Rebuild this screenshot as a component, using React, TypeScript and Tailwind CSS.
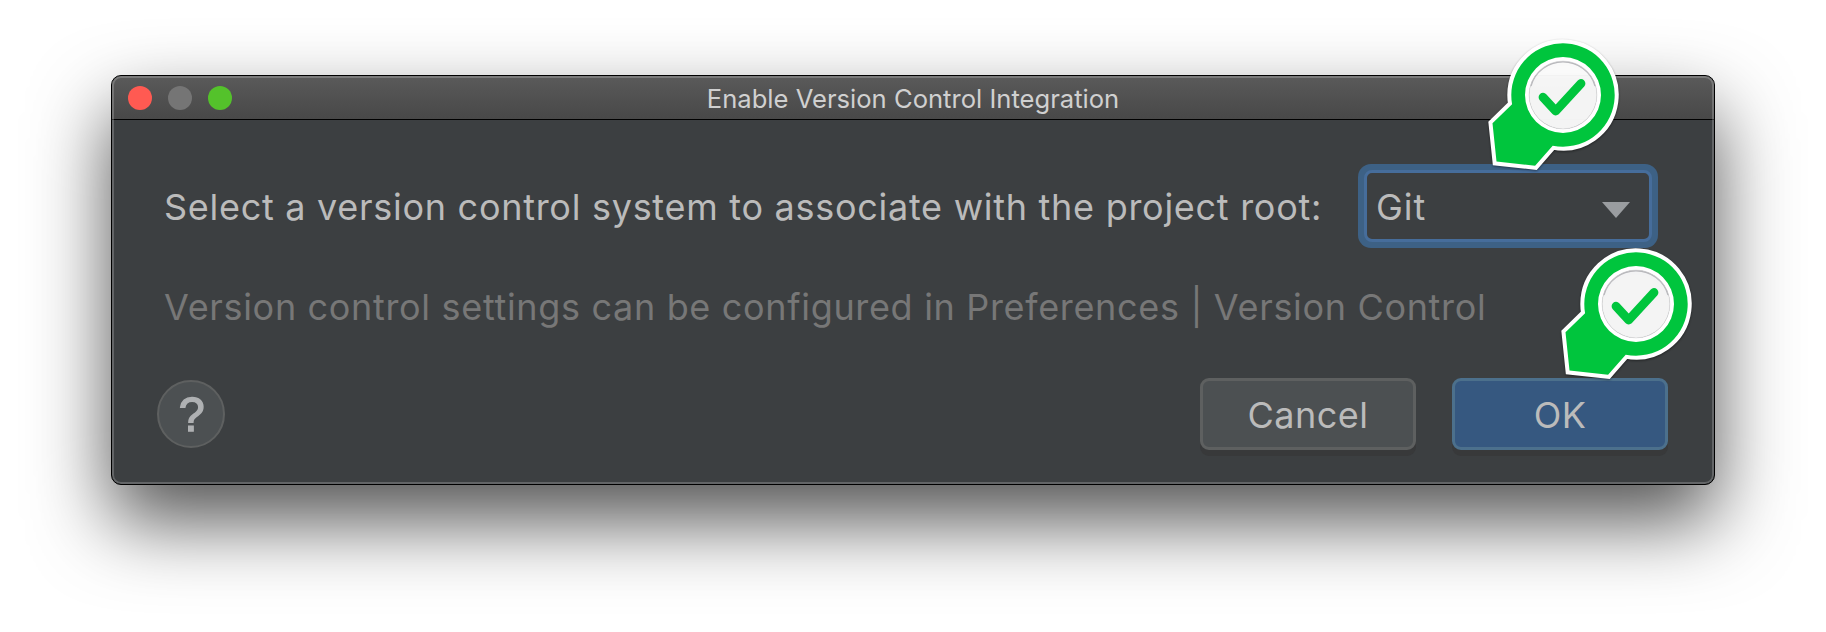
type MarkerProps = { className: string };

function CheckMarker({ className }: MarkerProps) {
  return (
    <svg
      className={`absolute h-[150px] w-[150px] overflow-visible drop-shadow-[0_1.5px_1px_rgba(0,0,0,0.45)] ${className}`}
      viewBox="-85 -65 150 150"
      aria-hidden="true"
    >
      <path
        fillRule="evenodd"
        fill="#fff"
        stroke="#fff"
        strokeWidth="8"
        d="M-51.7,0 A51.7,51.7 0 1 1 -10.3,50.7 L-27.9,70.7 L-66.5,66.5 L-70.5,28.3 L-50.9,9.2 A51.7,51.7 0 0 1 -51.7,0Z M-37.8,0 A37.8,37.8 0 1 0 37.8,0 A37.8,37.8 0 1 0 -37.8,0Z"
      />
      <path
        fillRule="evenodd"
        fill="#00c53d"
        d="M-51.7,0 A51.7,51.7 0 1 1 -10.3,50.7 L-27.9,70.7 L-66.5,66.5 L-70.5,28.3 L-50.9,9.2 A51.7,51.7 0 0 1 -51.7,0Z M-38,0 A38,38 0 1 0 38,0 A38,38 0 1 0 -38,0Z"
      />
      <circle r="33.9" fill="#fff" fillOpacity="0.95" stroke="#dcdcde" strokeWidth="0.7" />
      <path d="M-32,-9 A33.3,33.3 0 0 1 32,-9" fill="none" stroke="#b8b8bc" strokeWidth="1.2" />
      <path
        d="M-20,2.2 L-7.3,16 L18,-11.5"
        fill="none"
        stroke="#00c53d"
        strokeWidth="8.8"
        strokeLinecap="round"
        strokeLinejoin="round"
      />
    </svg>
  );
}

export default function App() {
  return (
    <div className="relative h-[632px] w-[1826px] overflow-hidden bg-white pt-[75px] pl-[111px] font-['Inter',sans-serif]">
      <div className="h-[410px] w-[1604px] rounded-[10px] border border-black bg-[#3c3f41] shadow-[0_36px_78px_rgba(0,0,0,0.68)]">
        <div className="relative flex h-full flex-col overflow-hidden rounded-[9px]">
          <header className="relative flex h-11 shrink-0 items-center border-b border-black bg-linear-to-b from-[#5a5a5a] to-[#484848] pl-4">
            <div className="flex gap-4">
              <span className="size-6 rounded-full bg-[#ff5a52]" />
              <span className="size-6 rounded-full bg-[#757575]" />
              <span className="size-6 rounded-full bg-[#54c22b]" />
            </div>
            <h1 className="absolute inset-x-0 pt-[2px] text-center text-[25.6px] leading-[44px] whitespace-nowrap text-[#d0d0d0]">
              Enable Version Control Integration
            </h1>
          </header>
          <main className="flex grow flex-col pr-[46px] pl-[45px]">
            <div className="mt-11 flex h-[84px] items-center justify-between pr-[10px] pl-[7px]">
              <label className="pt-[2px] text-[36px] leading-[44px] tracking-[0.72px] whitespace-nowrap text-[#bbbbbb]">
                Select a version control system to associate with the project root:
              </label>
              <div className="h-[84px] w-[300px] shrink-0 rounded-[13px] bg-[#3d6185] p-[6px]">
                <div className="flex h-full items-center justify-between rounded-[8px] border-[3px] border-[#466d9b] bg-[#3c3f41] pt-[2px] pr-[19px] pl-[9px] text-[36px] tracking-[0.9px] text-[#bbbbbb]">
                  <span>Git</span>
                  <svg className="mt-[5px] h-4 w-7" viewBox="0 0 28 16" aria-hidden="true">
                    <path d="M0 0H28L14 16Z" fill="#9a9da0" />
                  </svg>
                </div>
              </div>
            </div>
            <p className="mt-[37px] pl-[7px] text-[36px] leading-[44px] tracking-[0.67px] whitespace-nowrap text-[#777777]">
              Version control settings can be configured in Preferences | Version Control
            </p>
            <footer className="mt-[49px] flex h-[72px] items-center">
              <button className="flex size-[68px] items-center justify-center rounded-full border-2 border-[#5e6060] bg-[#4c5052] font-['Liberation_Sans',sans-serif] text-[49px] leading-none text-[#afb1b3] [-webkit-text-stroke:1.5px_#afb1b3]">
                <span className="scale-x-95 pl-px">?</span>
              </button>
              <button className="ml-auto h-[72px] w-[216px] rounded-[9px] border-[3px] border-[#5e6060] bg-[#4c5052] pt-[2px] text-[36px] tracking-[0.5px] text-[#bbbbbb] shadow-[0_6px_0_#38393a]">
                Cancel
              </button>
              <button className="ml-9 h-[72px] w-[216px] rounded-[9px] border-[3px] border-[#4c708c] bg-[#365880] pt-[2px] text-[36px] tracking-[0.5px] text-[#bbbbbb] shadow-[0_6px_0_#38393a]">
                OK
              </button>
            </footer>
          </main>
          <div className="pointer-events-none absolute inset-0 rounded-[9px] border-2 border-white/20" />
        </div>
      </div>
      <CheckMarker className="top-[29.5px] left-[1478.3px]" />
      <CheckMarker className="top-[238.7px] left-[1550.7px]" />
    </div>
  );
}
